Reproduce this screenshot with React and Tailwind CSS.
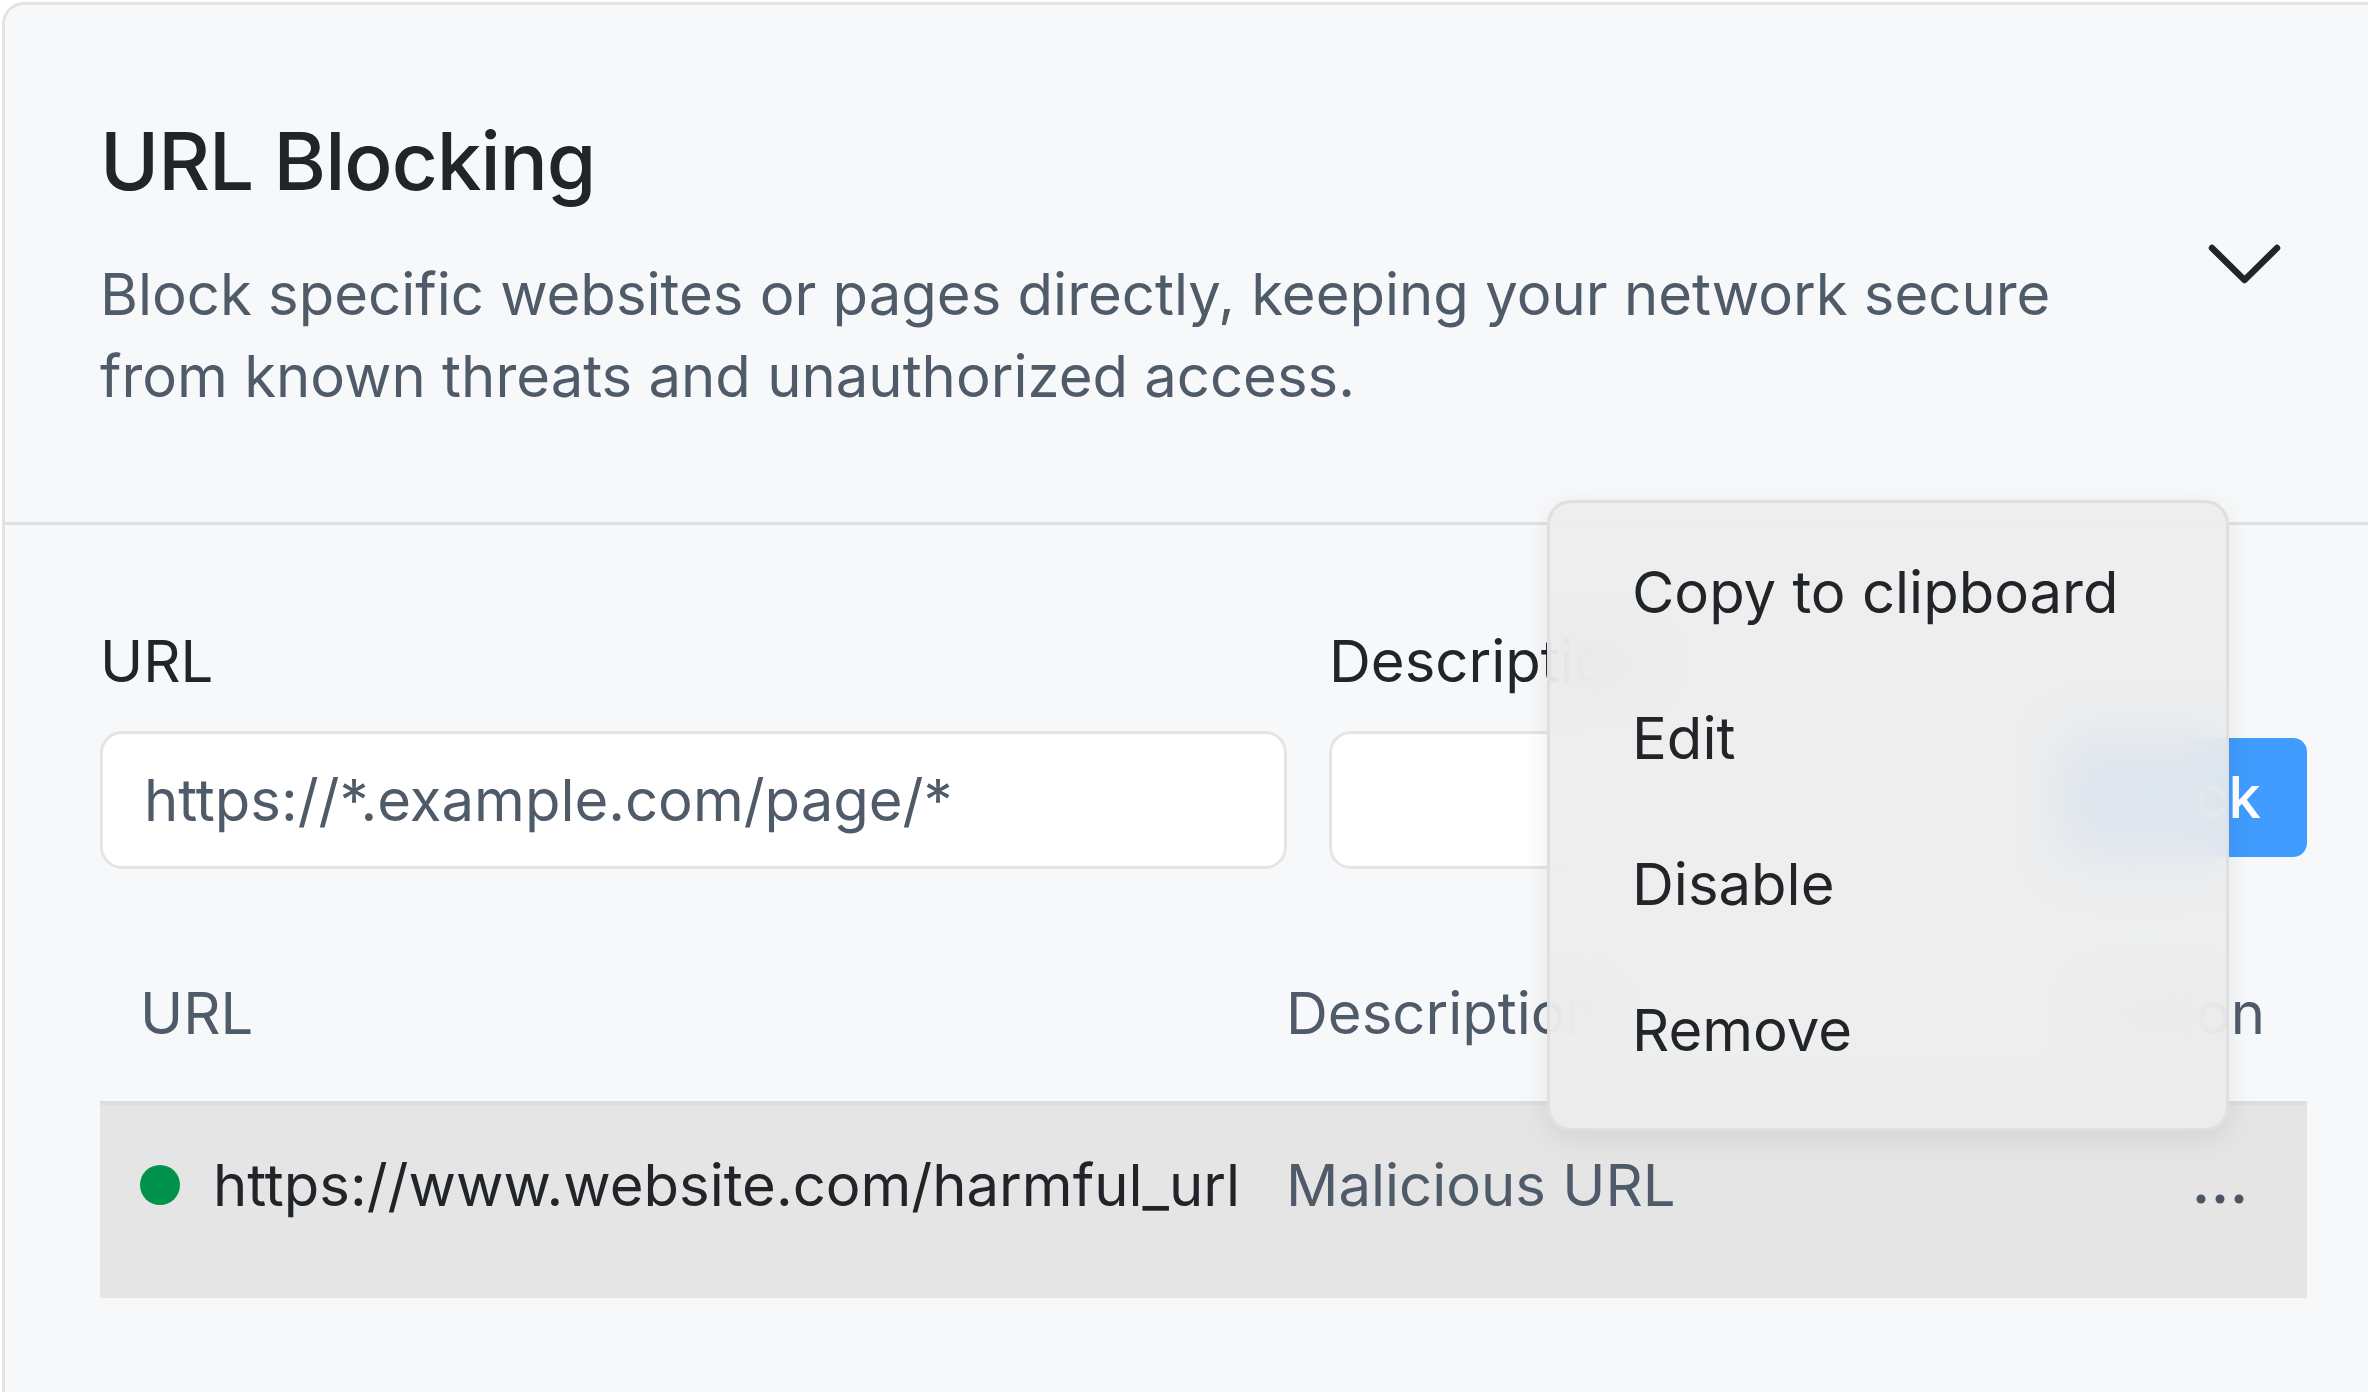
import React from "react";

function Chevron() {
  return (
    <svg width="73" height="42" viewBox="0 0 73 42" fill="none" className="shrink-0 mr-[26px]">
      <polyline points="4,4 36.5,36 69,4" stroke="#212529" strokeWidth="6.5" strokeLinecap="round" strokeLinejoin="round" />
    </svg>
  );
}

function Dots() {
  return (
    <svg width="50" height="12" viewBox="0 0 50 12" fill="none">
      <circle cx="6" cy="6" r="4.5" fill="#4b5563" />
      <circle cx="25" cy="6" r="4.5" fill="#4b5563" />
      <circle cx="44" cy="6" r="4.5" fill="#4b5563" />
    </svg>
  );
}

export default function App() {
  return (
    <div className="relative w-[2368px] h-[1392px] overflow-hidden bg-white font-['Inter',sans-serif]">
      <div className="ml-[2px] mt-[2px] w-[2403px] min-h-[1500px] rounded-tl-[22px] border-[3px] border-[#e2e3e5] bg-[#f7f8fa]">
        {/* Header */}
        <div className="flex items-center justify-between pl-[95px] pr-[95px] pt-[108px] pb-[105px] border-b-[3px] border-[#e0e1e3]">
          <div className="w-[2040px]">
            <h1 className="text-[80px] leading-[96px] font-medium text-[#212529] tracking-[-1px]">URL Blocking</h1>
            <p className="mt-[44px] text-[58px] leading-[82px] text-[#4f5b69]">
              Block specific websites or pages directly, keeping your network secure from known threats and unauthorized access.
            </p>
          </div>
          <Chevron />
        </div>

        {/* Body */}
        <div className="px-[95px] pt-[91px]">
          <div className="flex items-end gap-[42px]">
            <div className="w-[1187px] flex flex-col gap-[25px]">
              <label className="text-[58px] leading-[90px] text-[#212529]">URL</label>
              <input
                className="h-[138px] w-full rounded-[22px] border-[3px] border-[#e4e5e6] bg-white pl-[41px] text-[58px] text-[#212529] placeholder:text-[#4f5b69] outline-none"
                placeholder="https://*.example.com/page/*"
              />
            </div>
            <div className="flex-1 flex flex-col gap-[25px]">
              <label className="text-[58px] leading-[90px] text-[#212529]">Description</label>
              <input className="h-[138px] w-full rounded-[22px] border-[3px] border-[#e4e5e6] bg-white pl-[41px] text-[58px] text-[#212529] outline-none" />
            </div>
            <button className="mb-[12px] h-[119px] rounded-[14px] bg-[#409cff] px-[46px] text-[58px] font-medium text-white">
              Block
            </button>
          </div>

          {/* Table */}
          <div className="mt-[99px]">
            <div className="flex h-[133px] items-start pl-[40px] pr-[42px] text-[58px] leading-[90px] text-[#4f5b69]">
              <div className="w-[1146px]">URL</div>
              <div className="flex-1">Description</div>
              <div>Action</div>
            </div>
            <div className="flex h-[197px] items-start border-t-[4px] border-[#dcdddf] bg-[#e5e5e6] pl-[40px] pr-[42px] pt-[35px] text-[58px] leading-[90px]">
              <div className="w-[1146px] flex items-center gap-[33px] text-[#212529]">
                <span className="h-[40px] w-[40px] shrink-0 rounded-full bg-[#00924a]" />
                <span className="whitespace-nowrap">https://www.website.com/harmful_url</span>
              </div>
              <div className="flex-1 text-[#4f5b69]">Malicious URL</div>
              <div className="self-center -mt-[40px] flex w-[90px] justify-center">
                <Dots />
              </div>
            </div>
          </div>
        </div>
      </div>

      {/* Dropdown menu */}
      <div className="absolute left-[1547px] top-[500px] w-[682px] rounded-[24px] border-[3px] border-[#dfdfe0] bg-[#ececec]/[0.9] backdrop-blur-[30px] pt-[16px] pb-[25px] shadow-[0_8px_28px_rgba(0,0,0,0.08)]">
        {["Copy to clipboard", "Edit", "Disable", "Remove"].map((t) => (
          <div key={t} className="flex h-[146px] items-center pl-[82px] text-[58px] text-[#212529]">
            {t}
          </div>
        ))}
      </div>
    </div>
  );
}
